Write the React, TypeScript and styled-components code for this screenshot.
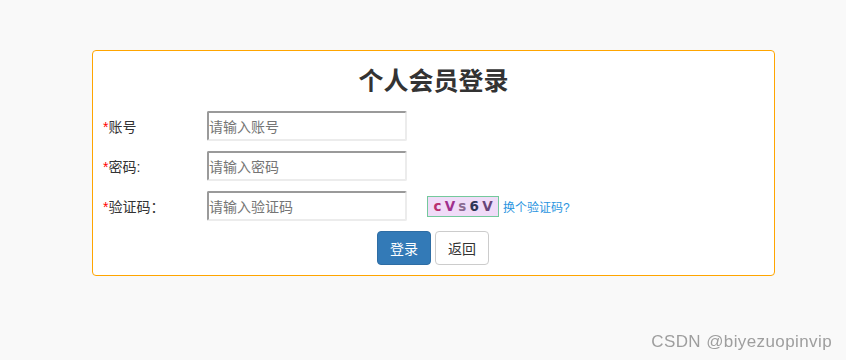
import React from "react";
import styled, { createGlobalStyle } from "styled-components";

const GlobalStyle = createGlobalStyle`
  html, body {
    margin: 0;
    padding: 0;
    background: #f9f9f9;
  }
  body {
    font-family: "Liberation Sans", "Noto Sans CJK SC", sans-serif;
    font-size: 14px;
    color: #333;
  }
  * { box-sizing: border-box; }
`;

const Page = styled.div`
  padding-top: 50px;
  padding-left: 92px;
  min-height: 360px;
`;

const Card = styled.form`
  width: 683px;
  background: #fff;
  border: 1px solid #ffa500;
  border-radius: 4px;
  padding: 0 10px 10px;
  display: flex;
  flex-direction: column;
  gap: 10px;
`;

const Title = styled.h3`
  margin: 13px 0 7px;
  font-size: 25px;
  line-height: 30px;
  font-weight: 700;
  text-align: center;
  color: #333;
  font-family: "Noto Sans CJK SC", sans-serif;
`;

const Row = styled.div`
  display: grid;
  grid-template-columns: 104px 200px auto auto 1fr;
  align-items: center;
  height: 30px;
`;

const Label = styled.label`
  font-size: 14px;
  color: #333;
  white-space: nowrap;
`;

const Star = styled.span`
  color: #f00;
`;

const Input = styled.input`
  width: 200px;
  height: 30px;
  padding: 0 1px 0 0;
  font-size: 14px;
  font-family: "Noto Sans CJK SC", sans-serif;
  color: #333;
  background: #fff;
  border-style: solid;
  border-width: 2px;
  border-color: #9a9a9a #ececec #ececec #9a9a9a;
  border-radius: 2px;
  outline: none;
  &::placeholder {
    color: #757575;
  }
`;

const Captcha = styled.div`
  margin-left: 20px;
  width: 72px;
  height: 21px;
  background: #f0dcf8;
  border: 1px solid #74c99c;
  display: flex;
  align-items: center;
  justify-content: center;
`;

const CaptchaText = styled.span`
  font-family: "DejaVu Sans", sans-serif;
  font-weight: 700;
  font-size: 13.5px;
  line-height: 19px;
  word-spacing: -1.5px;
  white-space: pre;
`;

const Ch = styled.span<{ $c: string }>`
  color: ${(p) => p.$c};
`;

const Link = styled.a`
  margin-left: 4px;
  font-size: 12px;
  color: #2b95e0;
  text-decoration: none;
  cursor: pointer;
  white-space: nowrap;
`;

const Actions = styled.div`
  display: flex;
  justify-content: center;
  gap: 4px;
  padding-right: 1px;
`;

const Button = styled.button<{ $primary?: boolean }>`
  height: 34px;
  padding: 6px 12px;
  font-size: 14px;
  line-height: 20px;
  font-family: "Noto Sans CJK SC", sans-serif;
  border-radius: 4px;
  border: 1px solid ${(p) => (p.$primary ? "#2e6da4" : "#ccc")};
  background: ${(p) => (p.$primary ? "#337ab7" : "#fff")};
  color: ${(p) => (p.$primary ? "#fff" : "#333")};
  cursor: pointer;
`;

const Watermark = styled.div`
  position: fixed;
  right: 14px;
  bottom: 9px;
  font-family: "Liberation Sans", sans-serif;
  font-size: 17px;
  letter-spacing: 0.4px;
  line-height: 18px;
  color: #9e9e9e;
`;

const captcha: [string, string][] = [
  ["c", "#b8306e"],
  ["V", "#a02f8e"],
  ["s", "#8a6a92"],
  ["6", "#2e3656"],
  ["V", "#674679"],
];

export default function App() {
  return (
    <>
      <GlobalStyle />
      <Page>
        <Card onSubmit={(e) => e.preventDefault()}>
          <Title>个人会员登录</Title>
          <Row>
            <Label>
              <Star>*</Star>账号
            </Label>
            <Input placeholder="请输入账号" />
          </Row>
          <Row>
            <Label>
              <Star>*</Star>密码:
            </Label>
            <Input type="password" placeholder="请输入密码" />
          </Row>
          <Row>
            <Label>
              <Star>*</Star>验证码：
            </Label>
            <Input placeholder="请输入验证码" />
            <Captcha>
              <CaptchaText>
                {captcha.map(([ch, c], i) => (
                  <React.Fragment key={i}>
                    {i > 0 ? " " : ""}
                    <Ch $c={c}>{ch}</Ch>
                  </React.Fragment>
                ))}
              </CaptchaText>
            </Captcha>
            <Link>换个验证码?</Link>
          </Row>
          <Actions>
            <Button type="submit" $primary>
              登录
            </Button>
            <Button type="button">返回</Button>
          </Actions>
        </Card>
      </Page>
      <Watermark>CSDN @biyezuopinvip</Watermark>
    </>
  );
}
